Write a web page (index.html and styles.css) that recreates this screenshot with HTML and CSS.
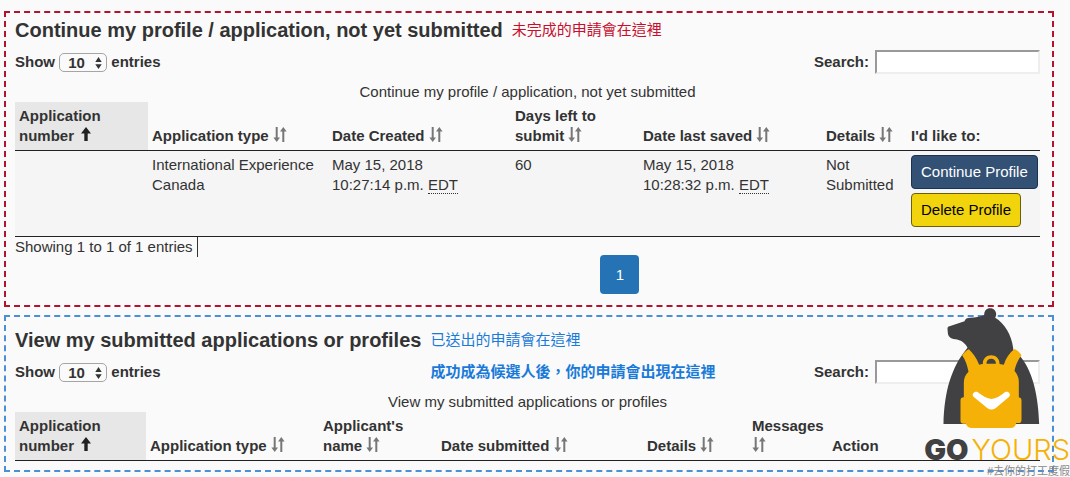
FILE: index.html
```html
<!DOCTYPE html>
<html lang="en">
<head>
    <meta charset="utf-8">
    <title>My applications</title>
    <link rel="stylesheet" href="styles.css">
</head>
<body>
    <svg class="sprite" aria-hidden="true">
        <symbol id="sort" viewBox="0 0 14 15">
            <path d="M2.7 0h2v10.500h2.300L3.700 15 .4 10.500h2.300zM9.300 15h2V4.500h2.300L10.300 0 7 4.500h2.300z"/>
        </symbol>
        <symbol id="sort-up" viewBox="0 0 10 14">
            <path d="M5 0l5 6.4H6.7V14H3.3V6.4H0z"/>
        </symbol>
        <symbol id="updown" viewBox="0 0 7 12">
            <path d="M3.5 0L6.7 5H.3zM3.5 12L.3 7.200h6.400z"/>
        </symbol>
    </svg>
    <main class="page">
        <section class="panel panel-red">
            <div class="top">
                <h2>Continue my profile / application, not yet submitted</h2>
                <p class="note">未完成的申請會在這裡</p>
                <label class="length">Show
                    <span class="select">
                        <select><option>10</option><option>25</option><option>50</option></select>
                        <svg><use href="#updown"/></svg>
                    </span>
                    entries</label>
                <label class="search">Search: <input type="search"></label>
            </div>
            <table>
                <caption>Continue my profile / application, not yet submitted</caption>
                <colgroup>
                    <col class="w133"><col class="w180"><col class="w183"><col class="w128"><col class="w183"><col class="w85"><col class="w133">
                </colgroup>
                <thead>
                    <tr>
                        <th class="sorted">Application number <svg class="up"><use href="#sort-up"/></svg></th>
                        <th>Application type <svg class="sort"><use href="#sort"/></svg></th>
                        <th>Date Created <svg class="sort"><use href="#sort"/></svg></th>
                        <th>Days left to submit <svg class="sort"><use href="#sort"/></svg></th>
                        <th>Date last saved <svg class="sort"><use href="#sort"/></svg></th>
                        <th>Details <svg class="sort"><use href="#sort"/></svg></th>
                        <th>I'd like to:</th>
                    </tr>
                </thead>
                <tbody>
                    <tr>
                        <td></td>
                        <td>International Experience Canada</td>
                        <td>May 15, 2018<br>10:27:14 p.m. <abbr title="Eastern Daylight Time">EDT</abbr></td>
                        <td>60</td>
                        <td>May 15, 2018<br>10:28:32 p.m. <abbr title="Eastern Daylight Time">EDT</abbr></td>
                        <td>Not Submitted</td>
                        <td class="actions">
                            <button class="btn btn-primary">Continue Profile</button>
                            <button class="btn btn-warning">Delete Profile</button>
                        </td>
                    </tr>
                </tbody>
            </table>
            <div class="bottom">
                <p class="info">Showing 1 to 1 of 1 entries</p>
                <nav class="pages"><a href="#" class="current">1</a></nav>
            </div>
        </section>

        <section class="panel panel-blue">
            <div class="top">
                <h2>View my submitted applications or profiles</h2>
                <p class="note">已送出的申請會在這裡</p>
                <label class="length">Show
                    <span class="select">
                        <select><option>10</option><option>25</option><option>50</option></select>
                        <svg><use href="#updown"/></svg>
                    </span>
                    entries</label>
                <p class="note strong">成功成為候選人後，你的申請會出現在這裡</p>
                <label class="search">Search: <input type="search"></label>
            </div>
            <table>
                <caption>View my submitted applications or profiles</caption>
                <colgroup>
                    <col class="w131"><col class="w173"><col class="w118"><col class="w206"><col class="w105"><col class="w80"><col class="w212">
                </colgroup>
                <thead>
                    <tr>
                        <th class="sorted">Application number <svg class="up"><use href="#sort-up"/></svg></th>
                        <th>Application type <svg class="sort"><use href="#sort"/></svg></th>
                        <th>Applicant's name <svg class="sort"><use href="#sort"/></svg></th>
                        <th>Date submitted <svg class="sort"><use href="#sort"/></svg></th>
                        <th>Details <svg class="sort"><use href="#sort"/></svg></th>
                        <th>Messages <svg class="sort"><use href="#sort"/></svg></th>
                        <th>Action</th>
                    </tr>
                </thead>
            </table>
        </section>

        <!-- watermark -->
        <div class="logo">
            <svg class="bear" viewBox="130 25 290 363">
                <path fill="#414042" d="M143 88c0-5 2-7 6-8l45-15c2-8 8-11 17-11 16 0 29-2 42-8 0-12 7-20 18-20s18 8 18 18c0 4-1 7-3 10 28 17 49 50 54 91 0 2 0 5 1 7 46 33 74 110 77 221H131c2-98 24-172 72-229-8-15-20-23-37-25-14-2-22-10-22-20z"/>
                <path fill="#f5b107" d="M207 149c13 12 23 26 31 46 4-1 7-2 11-2v-2c0-14 11-24 25-24s25 10 25 24v2l13 2c6-19 16-35 32-47 9 4 15 10 21 19-10 13-17 28-21 47 8 9 13 19 13 32v47c6 1 8 4 8 10v57c0 7-3 10-9 10h-7c-2 10-7 15-17 15H216c-9 0-14-4-18-13h-7c-6 0-9-3-9-9v-61c0-6 3-9 10-9v-43c0-14 4-25 14-34-4-19-9-35-19-49 6-8 12-14 20-18z"/>
                <path fill="#414042" d="M260 192v-2c0-8 6-13 14-13s14 5 14 13v2z"/>
                <path fill="#fff" d="M233 277c14 11 28 20 42 21 14-1 28-10 41-21 9-4 19 6 12 14l-40 34c-9 6-17 6-26 0l-41-34c-7-8 3-18 12-14z"/>
            </svg>
            <p class="brand"><b>GO</b>YOURS</p>
            <p class="tagline">#去你的打工度假</p>
        </div>
    </main>
</body>
</html>
```
FILE: styles.css
```css
* {
    box-sizing: border-box;
}
body {
    margin: 0;
    background: #fafafa;
    color: #333;
    font: 15px/20px "Liberation Sans", "Noto Sans CJK TC", Arial, sans-serif;
}
h2, p {
    margin: 0;
}
.sprite {
    position: absolute;
    width: 0;
    height: 0;
}
.page {
    position: relative;
    padding: 11px 16px 5px 4px;
}
.panel {
    padding: 0 12px 0 9px;
    border: 2px dashed #b5122f;
}
.panel-red {
    padding-bottom: 11px;
}
.panel-blue {
    margin-top: 8px;
    padding-top: 6px;
    padding-bottom: 9px;
    border-color: #4a90d6;
}

/* heading, length menu and search box */
.top {
    display: grid;
    grid-template-columns: auto auto 1fr auto;
    grid-template-rows: 34px 30px;
    column-gap: 9px;
    align-items: center;
}
h2 {
    font-size: 20px;
    line-height: 24px;
}
.note {
    grid-column: 2;
    color: #c8102e;
    white-space: nowrap;
}
.panel-blue .note {
    color: #1a7ad9;
}
.note.strong {
    font-weight: bold;
}
.length, .search {
    font-weight: bold;
    white-space: nowrap;
}
.length {
    grid-column: 1;
    grid-row: 2;
}
.search {
    grid-column: 4;
    grid-row: 2;
    display: flex;
    align-items: center;
    gap: 6px;
}
.search input {
    width: 165px;
    height: 24px;
    border: 2px solid;
    border-color: #999 #eee #eee #999;
    background: #fff;
}
.select {
    position: relative;
    display: inline-block;
}
.select select {
    appearance: none;
    width: 48px;
    height: 19px;
    padding: 0 8px;
    border: 1px solid #a5a5a5;
    border-radius: 5px;
    background: #fafafa;
    color: inherit;
    font: inherit;
    line-height: 17px;
    vertical-align: middle;
}
.select svg {
    position: absolute;
    right: 5px;
    top: 5px;
    width: 7px;
    height: 12px;
    fill: #333;
    pointer-events: none;
}

table {
    width: 100%;
    table-layout: fixed;
    border-collapse: separate;
    border-spacing: 0;
    border-bottom: 1px solid #222;
}
caption {
    padding: 5px 0 0;
}
.w80 { width: 80px; }
.w85 { width: 85px; }
.w105 { width: 105px; }
.w118 { width: 118px; }
.w128 { width: 128px; }
.w131 { width: 131px; }
.w133 { width: 133px; }
.w173 { width: 173px; }
.w180 { width: 180px; }
.w183 { width: 183px; }
.w206 { width: 206px; }
.w212 { width: 212px; }
th {
    padding: 4px;
    text-align: left;
    vertical-align: bottom;
}
.panel-red th {
    border-bottom: 1px solid #222;
}
.sorted {
    padding-right: 40px;
    background: #e7e7e7;
}
th svg {
    fill: #777;
}
.sort {
    width: 14px;
    height: 15px;
    vertical-align: -1px;
}
.up {
    width: 10px;
    height: 14px;
    margin-left: 3px;
    fill: #222;
}
td {
    padding: 4px;
    vertical-align: top;
}
tbody {
    background: #f5f5f5;
}
abbr {
    border-bottom: 1px dotted #333;
    text-decoration: none;
    line-height: 16px;
}
.actions {
    padding-bottom: 9px;
}
.btn {
    display: block;
    height: 34px;
    padding: 0 9px;
    border: 1px solid #1c3250;
    border-radius: 4px;
    background: #335075;
    color: #fff;
    font: inherit;
    white-space: nowrap;
}
.btn + .btn {
    margin-top: 4px;
}
.btn-warning {
    border-color: #6a5f0a;
    background: #f2d40d;
    color: #000;
}

.bottom {
    display: flex;
    align-items: flex-start;
}
.info {
    margin-right: 2px;
    padding-right: 4px;
    border-right: 1px solid #333;
}
.pages {
    flex: 1;
    padding-top: 18px;
    display: flex;
    justify-content: center;
}
.current {
    width: 39px;
    border-radius: 4px;
    background: #2572b4;
    color: #fff;
    line-height: 39px;
    text-align: center;
    text-decoration: none;
}

.logo {
    position: absolute;
    right: 0;
    bottom: 0;
    display: flex;
    flex-direction: column;
    align-items: flex-end;
}
.bear {
    width: 97px;
    height: 121px;
    margin-right: 30px;
}
.brand {
    margin-top: 6px;
    color: #f5b107;
    font: 300 29px/30px Inter, sans-serif;
}
.brand b {
    margin-right: 3px;
    color: #414042;
    font-weight: 900;
}
.tagline {
    color: #8a8a8a;
    font-size: 11px;
    line-height: 12px;
}
```
